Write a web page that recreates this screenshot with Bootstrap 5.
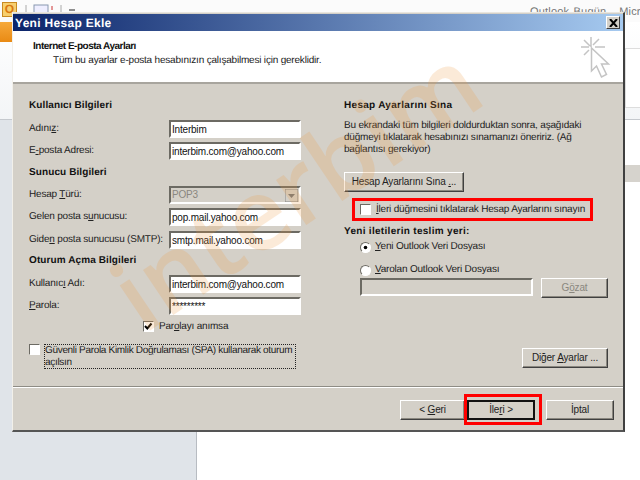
<!DOCTYPE html>
<html lang="tr">
<head>
<meta charset="utf-8">
<title>Yeni Hesap Ekle</title>
<link href="https://cdn.jsdelivr.net/npm/bootstrap@5.3.0/dist/css/bootstrap.min.css" rel="stylesheet">
<style>
html,body{margin:0;height:100%;overflow:hidden}
body{width:640px;height:480px;position:relative;background:#fff;font-family:"Liberation Sans",Arial,sans-serif;font-size:10px;letter-spacing:-.2px;text-rendering:geometricPrecision;line-height:12px;color:#222}
u{text-underline-offset:1px}
.app-top{height:22px;background:#fbfbfb}
.app-logo{width:15px;height:15px;margin:2px 0 0 2px;background:#f7cf6e;border:1px solid #c98a20;color:#d9780f;font-weight:700;font-size:12px;line-height:13px;letter-spacing:0;text-align:center}
.app-tools{gap:6px;padding-top:3px}
.app-links{position:absolute;top:5px;left:530px;font-size:11px;letter-spacing:.2px;color:#777;line-height:14px;white-space:nowrap;word-spacing:1px}
.ribbon{height:98px;background:linear-gradient(#fff,#f3f5f7);border-bottom:1px solid #c5c9ce}
.file-tab{width:12px;height:20px;background:linear-gradient(#f6a93b,#e98a14)}
.ribbon-r{position:absolute;left:625px;top:48px;width:15px;height:60px;background:#fff;border:1px solid #ddd;border-right:0}
.work{height:360px}
.side{width:197px;background:#e0e4e9;border-right:1px solid #b8bcc2}
.band{position:absolute;left:625px;top:165px;width:15px;height:17px;background:#d6d3cd}
.dlg{position:absolute;left:12px;top:12px;width:613px;height:420px;background:#d4d0c8;border-top:1px solid #e9e6df;border-left:1px solid #f2f0ea;border-right:2px solid #404040;border-bottom:2px solid #555;padding:1px 0 0 0;display:flex;flex-direction:column}
.ttl{height:17px;flex:none;background:linear-gradient(90deg,#0a246a,#a6caf0);color:#fff;font-weight:700;font-size:12px;letter-spacing:.3px;padding:0 2px;justify-content:space-between}
.xbtn{width:14px;height:13px;background:#d4d0c8;border:1px solid;border-color:#fff #404040 #404040 #fff;margin-right:1px;padding:0}
.hdr{height:53px;flex:none;background:#fff;border-bottom:2px solid #a8a59e;padding:9px 0 0 20px;position:relative}
.hdr h1{font-size:10px;letter-spacing:-.5px;font-weight:700;margin:0;line-height:14px;color:#111}
.hdr p{margin:0 0 0 20px;line-height:13px}
.cur{position:absolute;left:566px;top:4px}
.bdy{height:303px;flex:none;border-bottom:1px solid #8e8c85;padding-top:14px;position:relative}
.colL{width:272px;margin-left:16px;flex:none}
.colR{width:264px;margin-left:43px;flex:none}
.hd{font-weight:700;font-size:10px;letter-spacing:.1px;height:14px;line-height:16px;color:#111}
.hdw{letter-spacing:.3px}
.ln{height:18px;display:flex;align-items:center;justify-content:space-between}
.m1{margin-bottom:1px}.m2x{margin-bottom:2px}.m3{margin-bottom:3px}.m5{margin-bottom:5px}.m6{margin-bottom:6px}.m7{margin-bottom:7px}.m9{margin-bottom:9px}.m11{margin-bottom:11px}.m16{margin-bottom:16px}.m50{margin-bottom:50px}
.form-control.wf,.form-select.wf{width:132px;height:18px;min-height:0;padding:0 1px;border-radius:0;font-size:10px;letter-spacing:-.2px;line-height:14px;color:#111;font-family:inherit;border:2px solid;border-color:#6c6a63 #fff #fff #6c6a63;background-color:#fff;box-shadow:none}
.form-select.wf:disabled{background-color:#d4d0c8;color:#8a877f;background-image:url("data:image/svg+xml,%3Csvg xmlns='http://www.w3.org/2000/svg' width='13' height='13'%3E%3Crect width='13' height='13' fill='%23d4d0c8' stroke='%23888'/%3E%3Cpath d='M3 5h7l-3.500 4z' fill='%23777'/%3E%3C/svg%3E");background-position:right 1px center;background-size:13px 13px;border-color:#6c6a63 #fff #fff #6c6a63;opacity:1}
.form-control.wf.wide{width:173px;background:#d4d0c8}
.form-check-input.wc{width:11px;height:11px;margin:0;flex:none;border-radius:0;border:1px solid;border-color:#6c6a63 #fff #fff #6c6a63;background-color:#fff;box-shadow:none;float:none}
.form-check-input.wc:checked{background-color:#fff;background-size:11px 11px;background-image:url("data:image/svg+xml,%3Csvg xmlns='http://www.w3.org/2000/svg' viewBox='0 0 11 11'%3E%3Cpath d='M2 5l2.300 2.500L8.500 2.500' fill='none' stroke='%23000' stroke-width='2'/%3E%3C/svg%3E")}
.form-check-input.wr{width:11px;height:11px;margin:0;flex:none;border:1px solid;border-color:#6c6a63 #fff #fff #6c6a63;background-color:#fff;box-shadow:none;float:none}
.form-check-input.wr:checked{background-color:#fff;background-size:11px 11px;background-image:url("data:image/svg+xml,%3Csvg xmlns='http://www.w3.org/2000/svg' viewBox='0 0 11 11'%3E%3Ccircle cx='5.500' cy='5.500' r='1.800' fill='%23000'/%3E%3C/svg%3E")}
.btn.wb{--bs-btn-padding-x:0;--bs-btn-padding-y:0;--bs-btn-font-size:10px;--bs-btn-line-height:14px;--bs-btn-color:#111;--bs-btn-disabled-opacity:1;height:20px;border-radius:0;background:#d4d0c8;border:1px solid;border-color:#fff #404040 #404040 #fff;box-shadow:inset -1px -1px 0 #8a877f;color:#222;font-family:inherit;letter-spacing:-.15px;flex:none}
.btn.wb:disabled{color:#8a877f;border-color:#fff #404040 #404040 #fff;background:#d4d0c8}
.w120{width:120px}.w67{width:67px}.w86{width:86px}.w65{width:65px}.w68{width:68px}
.btn.wb.def{border:2px solid #111;box-shadow:none}
.chkrow{height:13px;padding-left:114px;gap:5px}
.spa{gap:4px;align-items:flex-start}
.spa span{width:252px;height:25px;border:1px dotted #222;letter-spacing:-.32px;padding:0;line-height:12px;display:block}
.redb{border:3px solid #f00;height:23px;margin-left:8px;width:241px;padding-left:5px;gap:5px;white-space:nowrap}
.rad{height:14px;padding-left:16px;gap:4px}
.rad2{padding-left:16px;gap:8px}
.ftr{flex:1;border-top:1px solid #fff;padding:12px 9px 0 0;gap:2px}
.gap9{margin-left:9px}
.redf{position:absolute;left:451px;top:381px;width:78px;height:31px;border:3px solid #f00;pointer-events:none}
.wm{position:absolute;left:150px;top:245px;font-family:"Open Sans","DejaVu Sans",sans-serif;font-weight:600;font-size:100px;line-height:100px;letter-spacing:0;color:#f09a40;opacity:.2;transform:rotate(-34deg);transform-origin:left bottom;pointer-events:none;white-space:nowrap}
</style>
</head>
<body>
<div class="app-top d-flex">
  <div class="app-logo">O</div>
  <div class="app-tools d-flex align-items-start ms-2">
    <svg width="62" height="14" viewBox="0 0 62 14"><path d="M1 2v10" stroke="#aaa"/><rect x="9" y="2" width="14" height="9" fill="#eef" stroke="#8898b0"/><path d="M27 3v4M27 9v1" stroke="#c33"/><path d="M36 2v10" stroke="#aaa"/><path d="M44 7h6" stroke="#222"/></svg>
  </div>
</div>
<div class="app-links">Outlook Bugün &nbsp;&nbsp;Micro</div>
<div class="ribbon d-flex"><div class="file-tab"></div></div>
<div class="ribbon-r"></div>
<div class="work d-flex"><div class="side"></div><div class="flex-grow-1"></div></div>
<div class="band"></div>

<div class="dlg">
  <div class="ttl d-flex align-items-center"><span>Yeni Hesap Ekle</span>
    <button class="xbtn d-flex align-items-center justify-content-center" type="button" aria-label="Kapat"><svg width="9" height="8" viewBox="0 0 9 8"><path d="M1 0l7 8M8 0L1 8" stroke="#000" stroke-width="2"/></svg></button>
  </div>
  <div class="hdr">
    <h1>Internet E-posta Ayarları</h1>
    <p>Tüm bu ayarlar e-posta hesabınızın çalışabilmesi için gereklidir.</p>
    <svg class="cur" width="32" height="46" viewBox="0 0 32 46" fill="none" stroke="#c4c4c4" stroke-width="1.500"><path d="M12 2v10M2 12h8M16 12h10M5 5l6 6M20 4l-6 6M5 20l5-5"/><path d="M12.500 13v23l5-5 5 11 5-2.500-5-10.500h7z" fill="#fff"/></svg>
  </div>
  <div class="bdy d-flex">
    <div class="colL">
      <div class="hd mb-2">Kullanıcı Bilgileri</div>
      <div class="ln mb-1"><label>Adını<u>z</u>:</label><input class="form-control wf" value="Interbim"></div>
      <div class="ln m5"><label>E<u>-</u>posta Adresi:</label><input class="form-control wf" value="interbim.com@yahoo.com"></div>
      <div class="hd m7">Sunucu Bilgileri</div>
      <div class="ln mb-1"><label>Hesap <u>T</u>ürü:</label><select class="form-select wf" disabled><option>POP3</option></select></div>
      <div class="ln m5"><label>Gelen posta s<u>u</u>nucusu:</label><input class="form-control wf" value="pop.mail.yahoo.com"></div>
      <div class="ln mb-1"><label>Gide<u>n</u> posta sunucusu (SMTP):</label><input class="form-control wf" value="smtp.mail.yahoo.com"></div>
      <div class="hd mb-2">Oturum Açma Bilgileri</div>
      <div class="ln mb-1"><label>Kullanıc<u>ı</u> Adı:</label><input class="form-control wf" value="interbim.com@yahoo.com"></div>
      <div class="ln m5"><label><u>P</u>arola:</label><input class="form-control wf" type="text" value="*********"></div>
      <div class="chkrow d-flex align-items-center m11"><input class="form-check-input wc" type="checkbox" checked><label>Par<u>o</u>layı anımsa</label></div>
      <div class="spa d-flex"><input class="form-check-input wc" type="checkbox"><span>Güvenli Parola Kimlik Do<u>ğ</u>rulaması (SPA) kullanarak oturum açılsın</span></div>
    </div>
    <div class="colR">
      <div class="hd hdw mb-2">Hesap Ayarlarını Sına</div>
      <p class="m16">Bu ekrandaki tüm bilgileri doldurduktan sonra, aşağıdaki düğmeyi tıklatarak hesabınızı sınamanızı öneririz. (Ağ bağlantısı gerekiyor)</p>
      <button class="btn wb w120 d-block m6" type="button">Hesap Ayarlarını Sına <u>.</u>..</button>
      <div class="redb d-flex align-items-center m3"><input class="form-check-input wc" type="checkbox"><label><u>İ</u>leri düğmesini tıklatarak Hesap Ayarlarını sınayın</label></div>
      <div class="hd hdw m2x">Yeni iletilerin teslim yeri:</div>
      <div class="rad d-flex align-items-center m9"><input class="form-check-input wr" type="radio" name="hedef" checked><label><u>Y</u>eni Outlook Veri Dosyası</label></div>
      <div class="rad d-flex align-items-center m1"><input class="form-check-input wr" type="radio" name="hedef"><label><u>V</u>arolan Outlook Veri Dosyası</label></div>
      <div class="rad2 d-flex align-items-start m50"><input class="form-control wf wide" disabled><button class="btn wb w67" type="button" disabled>G<u>ö</u>zat</button></div>
      <div class="d-flex justify-content-end"><button class="btn wb w86" type="button">Diğer <u>A</u>yarlar ...</button></div>
    </div>
  </div>
  <div class="ftr d-flex justify-content-end">
    <button class="btn wb w65" type="button">&lt; <u>G</u>eri</button>
    <button class="btn wb def w68" type="button">İle<u>r</u>i &gt;</button>
    <button class="btn wb w68 gap9" type="button">İptal</button>
  </div>
  <div class="redf"></div>
</div>
<div class="wm">interbim</div>
<script src="https://cdn.jsdelivr.net/npm/bootstrap@5.3.0/dist/js/bootstrap.bundle.min.js"></script>
</body>
</html>
